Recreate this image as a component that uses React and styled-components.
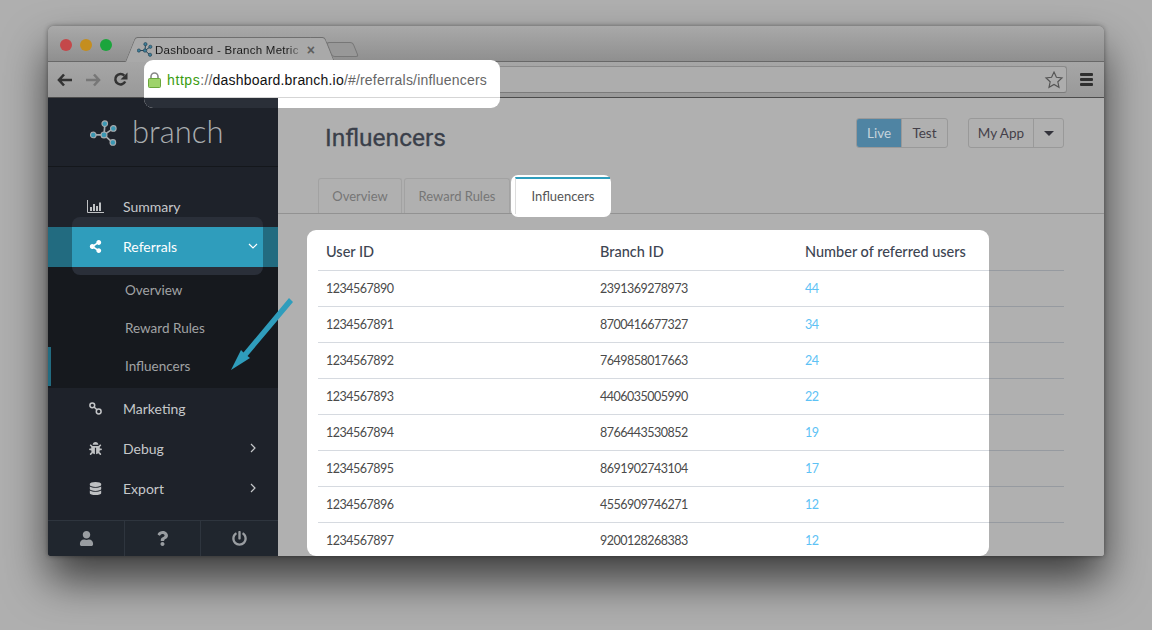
import React from 'react';
import styled, { createGlobalStyle } from 'styled-components';
import {
  FaBug,
  FaDatabase,
  FaPowerOff,
  FaQuestion,
  FaShareAlt,
  FaUser,
} from 'react-icons/fa';

const GlobalStyle = createGlobalStyle`
  html, body {
    margin: 0;
    padding: 0;
    width: 1152px;
    height: 630px;
    overflow: hidden;
    background: #afafaf;
    font-family: Lato, 'Open Sans', sans-serif;
  }
  * { box-sizing: border-box; }
`;

const Page = styled.div`
  width: 1152px;
  height: 630px;
  padding: 26px 48px 0 48px;
  background: #afafaf;
`;

const Frame = styled.div`
  position: relative;
  width: 1056px;
  height: 530px;
  border-radius: 6px 6px 3px 3px;
  box-shadow: 0 24px 44px rgba(0, 0, 0, 0.65), 0 0 5px rgba(0, 0, 0, 0.4);
  background: #b0b0b0;
`;

const Clip = styled.div`
  width: 100%;
  height: 100%;
  border-radius: 6px 6px 3px 3px;
  overflow: hidden;
  display: flex;
  flex-direction: column;
`;

const TitleBar = styled.div`
  height: 36px;
  flex: none;
  display: flex;
  align-items: flex-end;
  padding-left: 12px;
  gap: 10px;
  background: linear-gradient(#a9a9a9, #8f8f8f);
  border-bottom: 1px solid #686868;
  position: relative;
`;

const Lights = styled.div`
  display: flex;
  gap: 8px;
  align-self: flex-start;
  margin-top: 13px;
`;

const Light = styled.span`
  width: 12px;
  height: 12px;
  border-radius: 50%;
  background: ${p => p.$color};
`;

const ChromeTab = styled.div`
  position: relative;
  width: 186px;
  height: 25px;
  margin-left: 15px;
  margin-bottom: -1px;
  display: flex;
  align-items: center;
  gap: 2px;
  padding: 0 8px 0 0;
  font-family: 'Liberation Sans', sans-serif;
  font-size: 11.5px;
  color: #1b1b1b;
  background: #a9a9a9;
  border-top: 1px solid #6f6f6f;
  z-index: 1;
  &::before,
  &::after {
    content: '';
    position: absolute;
    top: -1px;
    bottom: 0;
    width: 14px;
    background: #a9a9a9;
    border-top: 1px solid #6f6f6f;
    z-index: -1;
  }
  &::before {
    left: -7px;
    transform: skewX(-22deg);
    border-left: 1px solid #6f6f6f;
    border-radius: 3px 0 0 0;
  }
  &::after {
    right: -7px;
    transform: skewX(22deg);
    border-right: 1px solid #6f6f6f;
    border-radius: 0 3px 0 0;
  }
`;

const TabTitle = styled.span`
  flex: 1;
  overflow: hidden;
  white-space: nowrap;
  letter-spacing: 0.25px;
  mask-image: linear-gradient(to right, #000 88%, transparent 100%);
`;

const TabClose = styled.span`
  font-size: 14px;
  line-height: 1;
  font-weight: 700;
  color: #5e5e5e;
`;

const NewTab = styled.div`
  width: 27px;
  height: 15px;
  margin: 0 0 4px -4px;
  transform: skewX(22deg);
  background: #989898;
  border: 1px solid #777;
  border-radius: 3px;
`;

const Toolbar = styled.div`
  height: 36px;
  flex: none;
  display: flex;
  align-items: center;
  padding: 0 11px 0 9px;
  background: linear-gradient(#a6a6a6, #999);
  border-bottom: 1px solid #4c4c4c;
`;

const NavIcons = styled.div`
  display: flex;
  align-items: center;
  gap: 12px;
  width: 87px;
  flex: none;
`;

const Omnibox = styled.div`
  flex: 1;
  height: 27px;
  display: flex;
  align-items: center;
  justify-content: flex-end;
  padding-right: 2px;
  background: #adadad;
  border: 1px solid #8a8a8a;
  border-bottom-color: #7b7b7b;
  border-radius: 3px;
`;

const Burger = styled.div`
  width: 13px;
  margin-left: 13px;
  display: flex;
  flex-direction: column;
  gap: 2px;
  span {
    height: 3px;
    border-radius: 1px;
    background: #2f2f2f;
  }
`;

const UrlSpot = styled.div`
  position: absolute;
  left: 96px;
  top: 34px;
  width: 356px;
  height: 48px;
  padding: 0 0 8px 4px;
  display: flex;
  align-items: center;
  gap: 6px;
  background: #fff;
  border-radius: 9px;
  overflow: hidden;
  z-index: 5;
  font-family: 'Liberation Sans', sans-serif;
  font-size: 14px;
  letter-spacing: 0.19px;
  color: #666;
  white-space: nowrap;
  &::before {
    content: '';
    position: absolute;
    left: 0;
    right: 0;
    top: 37px;
    height: 1px;
    background: #d5d5d5;
  }
  &::after {
    content: '';
    position: absolute;
    left: 0;
    bottom: 0;
    width: 134px;
    height: 10px;
    background: #2a2f38;
  }
`;

const Https = styled.span`
  color: #3a9c10;
  letter-spacing: 0.6px;
`;

const Host = styled.span`
  color: #111;
`;

const Main = styled.div`
  flex: 1;
  min-height: 0;
  display: flex;
`;

const Sidebar = styled.aside`
  position: relative;
  width: 230px;
  flex: none;
  display: flex;
  flex-direction: column;
  background: #1e222a;
  color: #c4c4c4;
`;

const Logo = styled.div`
  height: 69px;
  flex: none;
  display: flex;
  align-items: center;
  padding: 0 0 2px 42px;
  gap: 14px;
  border-bottom: 1px solid #14171b;
  font-size: 31px;
  font-weight: 300;
  color: #a9adb0;
  svg { margin-top: 5px; }
`;

const Nav = styled.nav`
  flex: 1;
  padding-top: 20px;
  display: flex;
  flex-direction: column;
`;

const NavRow = styled.div`
  position: relative;
  height: 40px;
  flex: none;
  display: flex;
  align-items: center;
  padding: 0 20px 2px 39px;
  font-size: 14px;
  color: ${p => (p.$active ? '#fff' : '#c6c8ca')};
`;

const NavIcon = styled.span`
  width: 36px;
  padding-left: 2px;
  flex: none;
  display: flex;
  align-items: center;
  font-size: 13px;
  color: #bfc1c3;
  ${NavRow}[data-active='true'] & { color: #fff; }
`;

const NavLabel = styled.span`
  flex: 1;
`;

const ReferralBand = styled.div`
  position: absolute;
  inset: 0;
  background: #226b80;
`;

const ReferralSpot = styled.div`
  position: absolute;
  left: 24px;
  top: -10px;
  width: 191px;
  height: 58px;
  padding: 10px 0;
  border-radius: 8px;
  background: #2a2f39;
  &::after {
    content: '';
    display: block;
    height: 40px;
    background: #2f9dbc;
  }
`;

const RowContent = styled.div`
  position: relative;
  flex: 1;
  display: flex;
  align-items: center;
`;

const SubNav = styled.div`
  height: 121px;
  flex: none;
  padding-top: 4px;
  margin-bottom: 1px;
  background: #16191e;
  display: flex;
  flex-direction: column;
`;

const SubRow = styled.div`
  height: 38px;
  flex: none;
  display: flex;
  align-items: center;
  font-size: 13.5px;
  color: #a1a3a5;
  padding-left: ${p => (p.$active ? '74px' : '77px')};
  ${p => p.$active && `
    border-left: 3px solid #226b80;
    height: 39px;
    padding-bottom: 1px;
  `}
`;

const Footer = styled.div`
  height: 36px;
  flex: none;
  display: grid;
  grid-template-columns: 76px 76px 78px;
  background: #20262e;
  border-top: 1px solid #2e353e;
`;

const FooterCell = styled.div`
  display: flex;
  align-items: center;
  justify-content: center;
  color: #999da1;
  font-size: 15px;
  & + & { border-left: 1px solid #2e353e; }
`;

const Arrow = styled.svg`
  position: absolute;
  left: 180px;
  top: 198px;
  z-index: 4;
`;

const Content = styled.main`
  position: relative;
  flex: 1;
  min-width: 0;
  display: flex;
  flex-direction: column;
  background: #b0b0b0;
`;

const Header = styled.header`
  height: 80px;
  flex: none;
  display: flex;
  align-items: flex-start;
  justify-content: space-between;
  padding: 20px 40px 0 47px;
`;

const Title = styled.h1`
  margin: 5px 0 0;
  font-family: Roboto, sans-serif;
  font-size: 24.5px;
  font-weight: 400;
  -webkit-text-stroke: 0.3px #3a3f4a;
  color: #3a3f4a;
`;

const Actions = styled.div`
  display: flex;
  gap: 20px;
`;

const BtnGroup = styled.div`
  display: flex;
  height: 30px;
  border: 1px solid #999;
  border-radius: 3px;
  overflow: hidden;
`;

const Btn = styled.div`
  width: ${p => p.$w}px;
  display: flex;
  align-items: center;
  justify-content: center;
  font-size: 13.5px;
  color: ${p => (p.$on ? '#c5d3dc' : '#444049')};
  background: ${p => (p.$on ? '#4f84a3' : 'transparent')};
  & + & { border-left: 1px solid #999; }
`;

const Caret = styled.span`
  width: 0;
  height: 0;
  border-left: 5px solid transparent;
  border-right: 5px solid transparent;
  border-top: 5px solid #33333b;
`;

const Tabs = styled.div`
  position: relative;
  height: 36px;
  flex: none;
  display: flex;
  gap: 2px;
  padding-left: 40px;
  border-bottom: 1px solid #929292;
`;

const Tab = styled.div`
  width: ${p => p.$w}px;
  height: 35px;
  display: flex;
  align-items: center;
  justify-content: center;
  font-size: 13px;
  color: #767676;
  border: 1px solid #a2a2a2;
  border-bottom: none;
  border-radius: 3px 3px 0 0;
`;

const TabSpot = styled.div`
  position: absolute;
  left: 233px;
  top: -3px;
  width: 100px;
  height: 42px;
  padding: 2px 1px 0 4px;
  background: #fff;
  border-radius: 7px;
`;

const ActiveTab = styled.div`
  height: 37px;
  padding-bottom: 2px;
  display: flex;
  align-items: center;
  justify-content: center;
  font-size: 13px;
  color: #555;
  border-top: 2px solid #2f9dbc;
  border-left: 1px solid #ddd;
`;

const CardSpot = styled.div`
  position: absolute;
  left: 29px;
  top: 132px;
  bottom: 0;
  width: 682px;
  background: #fff;
  border-radius: 9px;
`;

const Table = styled.table`
  position: relative;
  margin: 20px 0 0 40px;
  width: 746px;
  flex: none;
  border-collapse: collapse;
  table-layout: fixed;
  font-size: 12.5px;
  color: #4a4a4a;
`;

const Th = styled.th`
  height: 36px;
  padding: 0 8px;
  text-align: left;
  font-size: 14.5px;
  font-weight: 500;
  color: #3d4552;
  border-bottom: 1px solid rgba(50, 70, 100, 0.2);
`;

const Td = styled.td`
  height: 36px;
  padding: 0 8px;
  letter-spacing: -0.5px;
  border-bottom: 1px solid rgba(50, 70, 100, 0.2);
  color: ${p => (p.$link ? '#5dc2f5' : 'inherit')};
`;

const rows = [
  ['1234567890', '2391369278973', 44],
  ['1234567891', '8700416677327', 34],
  ['1234567892', '7649858017663', 24],
  ['1234567893', '4406035005990', 22],
  ['1234567894', '8766443530852', 19],
  ['1234567895', '8691902743104', 17],
  ['1234567896', '4556909746271', 12],
  ['1234567897', '9200128268383', 12],
];

function BranchMark({ size, fill, stroke }) {
  return (
    <svg width={size} height={size} viewBox="0 0 30 30">
      <g stroke={stroke} strokeWidth="1.8" fill="none">
        <path d="M3 16h12M15 16L16 4M15 16l10-7M15 16l9 8" />
      </g>
      <g fill={fill} stroke={stroke} strokeWidth="1.2">
        <circle cx="3.5" cy="16" r="3" />
        <circle cx="15" cy="16" r="3.2" />
        <circle cx="15.8" cy="4" r="3" />
        <circle cx="25" cy="9" r="3" />
        <circle cx="24.5" cy="24" r="3" />
      </g>
    </svg>
  );
}

function BackIcon({ color, flip }) {
  return (
    <svg width="16" height="14" viewBox="0 0 16 14" style={flip ? { transform: 'scaleX(-1)' } : undefined}>
      <path d="M7 1.5L2 7l5 5.5M2.5 7H15" fill="none" stroke={color} strokeWidth="2.6" />
    </svg>
  );
}

function ReloadIcon() {
  return (
    <svg width="15" height="15" viewBox="0 0 15 15">
      <path d="M12.2 9.5A5.2 5.2 0 1 1 11.3 3.6" fill="none" stroke="#333" strokeWidth="2.5" />
      <path d="M14.5 0.5v7h-7z" fill="#333" />
    </svg>
  );
}

function LockIcon() {
  return (
    <svg width="13" height="16" viewBox="0 0 13 16">
      <path d="M3 7V4.5a3.5 3.5 0 0 1 7 0V7" fill="none" stroke="#888" strokeWidth="1.6" />
      <rect x="0.5" y="6.5" width="12" height="9" rx="1" fill="#9ed36a" stroke="#6aa63c" />
    </svg>
  );
}

function RingsIcon() {
  return (
    <svg width="13" height="13" viewBox="0 0 13 13" fill="none" stroke="#c4c6c8" strokeWidth="1.5">
      <circle cx="3.3" cy="3.3" r="2.4" />
      <circle cx="9.7" cy="9.5" r="2.4" />
      <path d="M5 5l3 2.8" />
    </svg>
  );
}

function ChartIcon() {
  return (
    <svg width="17" height="13" viewBox="0 0 17 13" style={{ marginLeft: -2 }}>
      <path d="M0.5 0v12.5H17" fill="none" stroke="#bfc1c3" />
      <path d="M3 7h2v4H3zM6 4h2v7H6zM9 6h2v5H9zM12 2.500h2V11h-2z" fill="#bfc1c3" />
    </svg>
  );
}

function Chevron({ down }) {
  return (
    <svg width="10" height="10" viewBox="0 0 10 10" fill="none" stroke="currentColor" strokeWidth="1.2">
      <path d={down ? 'M1 3l4 4 4-4' : 'M3 1l4 4-4 4'} />
    </svg>
  );
}

export default function App() {
  return (
    <Page>
      <GlobalStyle />
      <Frame>
        <Clip>
          <TitleBar>
            <Lights>
              <Light $color="#c4484a" />
              <Light $color="#c58e1f" />
              <Light $color="#1ba53c" />
            </Lights>
            <ChromeTab>
              <BranchMark size={16} fill="#3f7f99" stroke="#1f3f52" />
              <TabTitle>Dashboard - Branch Metric</TabTitle>
              <TabClose>×</TabClose>
            </ChromeTab>
            <NewTab />
          </TitleBar>
          <Toolbar>
            <NavIcons>
              <BackIcon color="#333" />
              <BackIcon color="#777" flip />
              <ReloadIcon />
            </NavIcons>
            <Omnibox>
              <svg width="20" height="20" viewBox="0 0 24 24" fill="none" stroke="#555" strokeWidth="1.4">
                <path d="M12 2.5l2.9 6.2 6.7.8-5 4.6 1.4 6.7-6-3.4-6 3.4 1.4-6.7-5-4.6 6.7-.8z" />
              </svg>
            </Omnibox>
            <Burger>
              <span />
              <span />
              <span />
            </Burger>
          </Toolbar>
          <Main>
            <Sidebar>
              <Logo>
                <BranchMark size={28} fill="#3a97b3" stroke="#a6aaad" />
                branch
              </Logo>
              <Nav>
                <NavRow>
                  <NavIcon><ChartIcon /></NavIcon>
                  <NavLabel>Summary</NavLabel>
                </NavRow>
                <NavRow $active data-active="true">
                  <ReferralBand />
                  <ReferralSpot />
                  <RowContent>
                    <NavIcon><FaShareAlt /></NavIcon>
                    <NavLabel>Referrals</NavLabel>
                    <Chevron down />
                  </RowContent>
                </NavRow>
                <SubNav>
                  <SubRow>Overview</SubRow>
                  <SubRow>Reward Rules</SubRow>
                  <SubRow $active>Influencers</SubRow>
                </SubNav>
                <NavRow>
                  <NavIcon><RingsIcon /></NavIcon>
                  <NavLabel>Marketing</NavLabel>
                </NavRow>
                <NavRow>
                  <NavIcon><FaBug /></NavIcon>
                  <NavLabel>Debug</NavLabel>
                  <Chevron />
                </NavRow>
                <NavRow>
                  <NavIcon><FaDatabase /></NavIcon>
                  <NavLabel>Export</NavLabel>
                  <Chevron />
                </NavRow>
              </Nav>
              <Footer>
                <FooterCell><FaUser /></FooterCell>
                <FooterCell><FaQuestion /></FooterCell>
                <FooterCell><FaPowerOff /></FooterCell>
              </Footer>
              <Arrow width="66" height="76" viewBox="0 0 66 76">
                <path d="M61 2l4 4-45.500 54 2.500 2-19 12 10-20 2.500 2.500z" fill="#2f9dbc" />
              </Arrow>
            </Sidebar>
            <Content>
              <Header>
                <Title>Influencers</Title>
                <Actions>
                  <BtnGroup>
                    <Btn $w={44} $on>Live</Btn>
                    <Btn $w={46}>Test</Btn>
                  </BtnGroup>
                  <BtnGroup>
                    <Btn $w={64}>My App</Btn>
                    <Btn $w={30}><Caret /></Btn>
                  </BtnGroup>
                </Actions>
              </Header>
              <Tabs>
                <Tab $w={84}>Overview</Tab>
                <Tab $w={106}>Reward Rules</Tab>
                <TabSpot>
                  <ActiveTab>Influencers</ActiveTab>
                </TabSpot>
              </Tabs>
              <CardSpot />
              <Table>
                <colgroup>
                  <col style={{ width: 274 }} />
                  <col style={{ width: 205 }} />
                  <col />
                </colgroup>
                <thead>
                  <tr>
                    <Th>User ID</Th>
                    <Th>Branch ID</Th>
                    <Th>Number of referred users</Th>
                  </tr>
                </thead>
                <tbody>
                  {rows.map(row => (
                    <tr key={row[0]}>
                      <Td>{row[0]}</Td>
                      <Td>{row[1]}</Td>
                      <Td $link>{row[2]}</Td>
                    </tr>
                  ))}
                </tbody>
              </Table>
            </Content>
          </Main>
        </Clip>
        <UrlSpot>
          <LockIcon />
          <span>
            <Https>https</Https>://<Host>dashboard.branch.io</Host>/#/referrals/influencers
          </span>
        </UrlSpot>
      </Frame>
    </Page>
  );
}
